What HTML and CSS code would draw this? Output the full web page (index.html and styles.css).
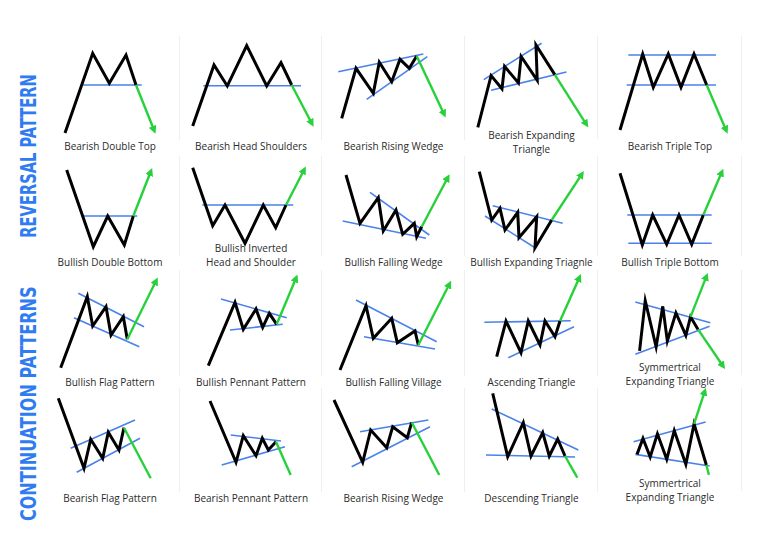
FILE: index.html
```html
<!DOCTYPE html>
<html>
<head>
<meta charset="utf-8">
<link rel="stylesheet" href="styles.css">
</head>
<body>
<div class="page">
  <div class="side">
    <div class="side-box rev"><span class="side-title">REVERSAL PATTERN</span></div>
    <div class="side-box cont"><span class="side-title">CONTINUATION PATTERNS</span></div>
  </div>
  <div class="grid">
    <!-- Row 1 -->
    <div class="cell r1">
      <svg class="chart" viewBox="40 36 140 104">
        <polyline class="b" points="82.7,85 141.7,85"/>
        <polyline class="k" points="65,133 92.7,53.3 109.3,83.3 126,55 136,85"/>
        <polyline class="ga" points="136,85 154,130"/>
      </svg>
      <div class="cap">Bearish Double Top</div>
    </div>
    <div class="cell r1">
      <svg class="chart" viewBox="180 36 142 104">
        <polyline class="b" points="203.3,85.7 301,85.7"/>
        <polyline class="k" points="192.7,126 214,65 227.3,86 246.7,45.7 266.7,86 281,62.7 291.7,85"/>
        <polyline class="ga" points="291.7,85 311.7,123.3"/>
      </svg>
      <div class="cap">Bearish Head Shoulders</div>
    </div>
    <div class="cell r1">
      <svg class="chart" viewBox="322 36 143 104">
        <polyline class="b" points="338.3,71.7 423.3,54"/>
        <polyline class="b" points="366.7,99.3 427.3,56.7"/>
        <polyline class="k" points="341.7,118.3 356,68.3 373.3,93.3 379.3,62.3 391.7,81.7 400,59.3 409.3,68.3 416.7,56"/>
        <polyline class="ga" points="416.7,56 444,114"/>
      </svg>
      <div class="cap">Bearish Rising Wedge</div>
    </div>
    <div class="cell r1">
      <svg class="chart" viewBox="465 36 133 104">
        <polyline class="b" points="483.3,80 541.7,43.3"/>
        <polyline class="b" points="490.7,90.7 566.7,72.3"/>
        <polyline class="k" points="477.3,128.3 490.7,76 501.7,89.3 504.3,66.7 518.3,83.3 521,56.7 537.3,80.7 536,45 555,75"/>
        <polyline class="ga" points="555,75 586.7,125"/>
      </svg>
      <div class="cap two">Bearish Expanding<br>Triangle</div>
    </div>
    <div class="cell r1">
      <svg class="chart" viewBox="598 36 144 104">
        <polyline class="b" points="628.3,55 716,55"/>
        <polyline class="b" points="626.7,85 716,85"/>
        <polyline class="k" points="620,130 642.7,54 653.3,87.3 668.3,54 681,87.3 694,54 706.7,85"/>
        <polyline class="ga" points="706.7,85 726,130"/>
      </svg>
      <div class="cap">Bearish Triple Top</div>
    </div>

    <!-- Row 2 -->
    <div class="cell r2">
      <svg class="chart" viewBox="40 156 140 100">
        <polyline class="b" points="81.7,216 137.3,216"/>
        <polyline class="k" points="66.7,170 93.3,246.7 107.7,216 124.3,245 133.3,216"/>
        <polyline class="ga" points="133.3,216 150.7,171.7"/>
      </svg>
      <div class="cap">Bullish Double Bottom</div>
    </div>
    <div class="cell r2">
      <svg class="chart" viewBox="180 156 142 100">
        <polyline class="b" points="202.3,205 293.3,205"/>
        <polyline class="k" points="192.7,167.7 212.7,225.7 225,205 245,243.3 263.3,205 275.7,227.7 286,205"/>
        <polyline class="ga" points="286,205 304,170"/>
      </svg>
      <div class="cap two">Bullish Inverted<br>Head and Shoulder</div>
    </div>
    <div class="cell r2">
      <svg class="chart" viewBox="322 156 143 100">
        <polyline class="b" points="342.7,221 426,238.3"/>
        <polyline class="b" points="370,192.3 429.3,235"/>
        <polyline class="k" points="346,175 360,223.3 378.3,197.7 383.3,231 396,210 402.7,234.3 414.3,223.3 416.7,236.7 421.7,226.7"/>
        <polyline class="ga" points="421.7,226.7 447.7,177.7"/>
      </svg>
      <div class="cap">Bullish Falling Wedge</div>
    </div>
    <div class="cell r2">
      <svg class="chart" viewBox="465 156 133 100">
        <polyline class="b" points="492.7,205.7 562.7,223.3"/>
        <polyline class="b" points="485,216 535,247.7"/>
        <polyline class="k" points="479.3,171.7 491.7,220 500,208.3 505,230 517.7,212.3 519,237.7 536.7,216.7 535,247.7 551.7,220"/>
        <polyline class="ga" points="551.7,220 581.7,174.3"/>
      </svg>
      <div class="cap">Bullish Expanding Triagnle</div>
    </div>
    <div class="cell r2">
      <svg class="chart" viewBox="598 156 144 100">
        <polyline class="b" points="627.3,215 711.7,215"/>
        <polyline class="b" points="628.3,243.3 711.7,243.3"/>
        <polyline class="k" points="620,173.3 642.3,245 652.7,215 666.7,244.3 679,215 691.7,244.3 703.3,215"/>
        <polyline class="ga" points="703.3,215 721.7,172.3"/>
      </svg>
      <div class="cap">Bullish Triple Bottom</div>
    </div>

    <!-- Row 3 -->
    <div class="cell r3">
      <svg class="chart" viewBox="40 270 140 106">
        <polyline class="b" points="78.3,293.3 144,326.7"/>
        <polyline class="b" points="74,317.7 139.3,346.7"/>
        <polyline class="k" points="60.7,367.7 87.3,296.7 92.7,326 106,306.7 111,335 123.3,316.7 127.3,339.3"/>
        <polyline class="ga" points="127.3,339.3 156,281"/>
      </svg>
      <div class="cap">Bullish Flag Pattern</div>
    </div>
    <div class="cell r3">
      <svg class="chart" viewBox="180 270 142 106">
        <polyline class="b" points="221,299 286.7,317.7"/>
        <polyline class="b" points="230,330 282.7,324.3"/>
        <polyline class="k" points="208.3,365.7 235,302.3 243.3,329.3 256,309 262.7,327.3 269.3,313.3 276.7,324.3"/>
        <polyline class="ga" points="276.7,324.3 296,278.3"/>
      </svg>
      <div class="cap">Bullish Pennant Pattern</div>
    </div>
    <div class="cell r3">
      <svg class="chart" viewBox="322 270 143 106">
        <polyline class="b" points="356,300 436.7,341.7"/>
        <polyline class="b" points="364,336.7 435,349"/>
        <polyline class="k" points="340,370 366,305.7 373.3,338.3 391.7,318.3 397.3,342.7 415,331 418.3,345"/>
        <polyline class="ga" points="418.3,345 449.3,284.3"/>
      </svg>
      <div class="cap">Bullish Falling Village</div>
    </div>
    <div class="cell r3">
      <svg class="chart" viewBox="465 270 133 106">
        <polyline class="b" points="484.3,322.3 570.7,320.7"/>
        <polyline class="b" points="508.3,357.7 574,326.7"/>
        <polyline class="k" points="496.7,356.7 506,321 521,352.7 528.3,321 540,345 545,321 555,336.7 560,321"/>
        <polyline class="ga" points="560,321 579.3,277.7"/>
      </svg>
      <div class="cap">Ascending Triangle</div>
    </div>
    <div class="cell r3">
      <svg class="chart" viewBox="598 270 144 106">
        <polyline class="b" points="635,302.3 710.7,323.3"/>
        <polyline class="b" points="635,355 710,326.7"/>
        <polyline class="k" points="639.3,351.7 645,301 656,347.7 662.7,306.7 667.3,341.7 676,313.3 686,336 690.7,317.3 698.3,330"/>
        <polyline class="ga" points="690.7,317.3 706.7,276.7"/>
        <polyline class="ga" points="698.3,330 723.3,366.7"/>
      </svg>
      <div class="cap two">Symmertrical<br>Expanding Triangle</div>
    </div>

    <!-- Row 4 -->
    <div class="cell r4">
      <svg class="chart" viewBox="40 388 140 104">
        <polyline class="b" points="70.7,448.3 135,420"/>
        <polyline class="b" points="76.7,472.3 140,438.3"/>
        <polyline class="k" points="58.3,398.3 84,468.3 90.7,439.3 102.7,458.3 108.3,432.3 119,450 124,427.7"/>
        <polyline class="g" points="124,427.7 150.7,478.3"/>
      </svg>
      <div class="cap">Bearish Flag Pattern</div>
    </div>
    <div class="cell r4">
      <svg class="chart" viewBox="180 388 142 104">
        <polyline class="b" points="230.7,435 281,441"/>
        <polyline class="b" points="221.7,465 285,446.7"/>
        <polyline class="k" points="210,401 236,462.3 243.3,435.7 256,455.7 262.3,438.3 268.3,450 276,441.7"/>
        <polyline class="g" points="276,441.7 290.7,475"/>
      </svg>
      <div class="cap">Bearish Pennant Pattern</div>
    </div>
    <div class="cell r4">
      <svg class="chart" viewBox="322 388 143 104">
        <polyline class="b" points="360,431.7 428.3,420"/>
        <polyline class="b" points="351.7,466.7 430,426.7"/>
        <polyline class="k" points="334,400 362.7,462.3 370.7,430 386.7,447.7 392.7,426.7 407.3,437.7 411.7,422.3"/>
        <polyline class="g" points="411.7,422.3 439.3,475"/>
      </svg>
      <div class="cap">Bearish Rising Wedge</div>
    </div>
    <div class="cell r4">
      <svg class="chart" viewBox="465 388 133 104">
        <polyline class="b" points="491.7,409 578.3,450"/>
        <polyline class="b" points="486,455 575,457"/>
        <polyline class="k" points="492.7,393.3 507.7,456.7 523.3,422.7 531,456 542.7,432.7 549.3,456 557.7,439 565,456"/>
        <polyline class="g" points="565,456 577.3,477.7"/>
      </svg>
      <div class="cap">Descending Triangle</div>
    </div>
    <div class="cell r4">
      <svg class="chart" viewBox="598 388 144 104">
        <polyline class="b" points="633.3,442.3 706,422.3"/>
        <polyline class="b" points="635,455 710,466.7"/>
        <polyline class="k" points="636.7,455 642.7,439 650,457.7 657.3,434.3 666.7,460 674.3,431 686,465 694.3,424.3 706.7,465.7"/>
        <polyline class="ga" points="694.3,424.3 705,391.7"/>
        <polyline class="g" points="706.7,465.7 709.3,475.7"/>
      </svg>
      <div class="cap two">Symmertrical<br>Expanding Triangle</div>
    </div>
  </div>
</div>
<svg class="defs" width="0" height="0">
  <defs>
    <marker id="head" viewBox="0 0 10 10" refX="5" refY="5" markerWidth="8" markerHeight="8" markerUnits="userSpaceOnUse" orient="auto">
      <path d="M0,0 L10,5 L0,10 Z" fill="#27d13a"/>
    </marker>
  </defs>
</svg>
</body>
</html>
```
FILE: styles.css
```css
html, body {
  margin: 0;
  padding: 0;
  background: #ffffff;
}

.page {
  display: flex;
  align-items: flex-start;
  width: 768px;
  height: 543px;
  overflow: hidden;
}

.side {
  flex: none;
  width: 40px;
  padding-top: 36px;
  display: flex;
  flex-direction: column;
}

.side-box {
  display: flex;
  align-items: center;
  justify-content: flex-end;
  padding-right: 1px;
}

.side-box.rev { height: 239px; }
.side-box.cont { height: 258px; }

.side-title {
  display: block;
  writing-mode: vertical-rl;
  white-space: nowrap;
  font-family: "DejaVu Sans", sans-serif;
  font-weight: bold;
  font-size: 22px;
  line-height: 20px;
  color: #2f7cf2;
}

.rev .side-title { transform: rotate(180deg) scaleY(0.665); }
.cont .side-title { transform: rotate(180deg) scaleY(0.73); }

.grid {
  display: grid;
  grid-template-columns: 140px 142px 143px 133px 144px;
  grid-template-rows: 120px 114px 118px 116px;
  margin-top: 36px;
}

.cell {
  display: flex;
  flex-direction: column;
}

.chart {
  display: block;
  width: 100%;
  box-shadow: inset -1px 0 #efefef;
}

.r1 .chart { height: 104px; }
.r2 .chart { height: 100px; }
.r3 .chart { height: 106px; }
.r4 .chart { height: 104px; }

.cap {
  font-family: "Open Sans", "Liberation Sans", sans-serif;
  font-size: 10px;
  line-height: 12px;
  color: #2b2b2b;
  text-align: center;
  white-space: nowrap;
}

.cap.two {
  line-height: 14px;
  margin-top: -15px;
}

.r1 .cap.two {
  margin-top: -11px;
}

.k {
  fill: none;
  stroke: #000000;
  stroke-width: 3;
  stroke-linejoin: miter;
  stroke-miterlimit: 6;
  stroke-linecap: butt;
}

.b {
  fill: none;
  stroke: #4a82ea;
  stroke-width: 1.6;
}

.g, .ga {
  fill: none;
  stroke: #27d13a;
  stroke-width: 2.4;
}

.ga {
  marker-end: url(#head);
}

.defs {
  display: block;
  width: 0;
  height: 0;
  overflow: hidden;
}
```
